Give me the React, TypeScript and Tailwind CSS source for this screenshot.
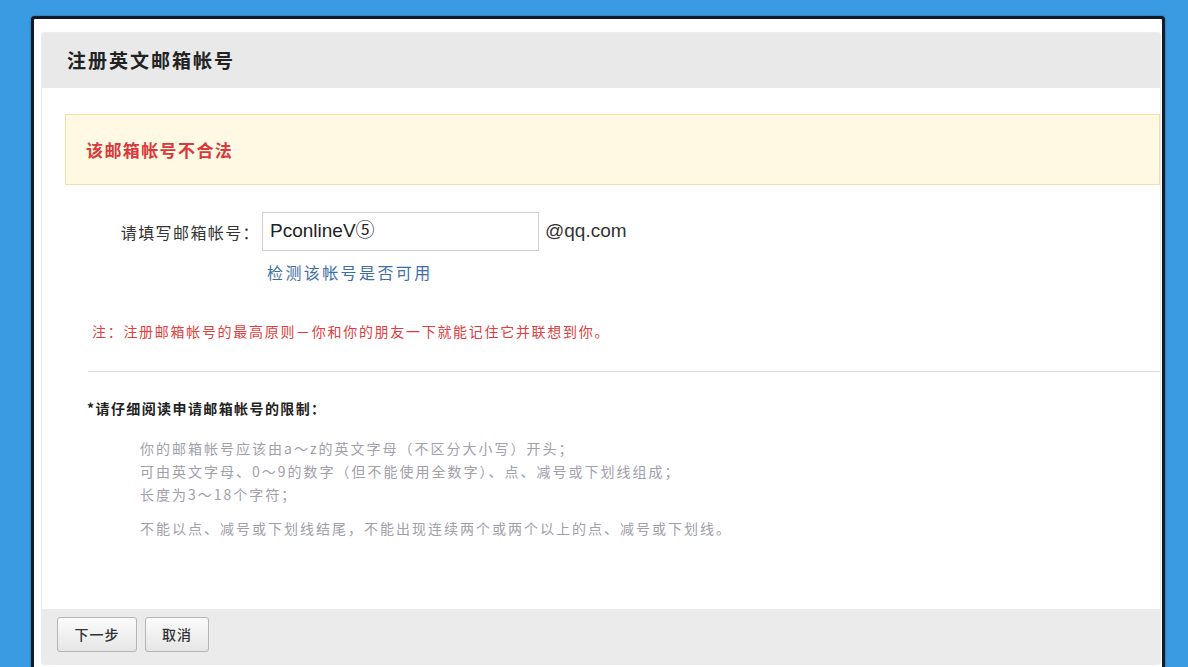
import React from "react";

const cjk = { fontFamily: '"Noto Sans CJK SC", "Noto Sans", sans-serif' };
const latin = { fontFamily: '"Liberation Sans", "Noto Sans CJK SC", sans-serif' };

export default function App() {
  const rules = [
    "你的邮箱帐号应该由a～z的英文字母（不区分大小写）开头；",
    "可由英文字母、0～9的数字（但不能使用全数字）、点、减号或下划线组成；",
    "长度为3～18个字符；",
  ];
  return (
    <div className="h-[667px] w-[1188px] overflow-hidden bg-[#3a9be3] pl-[31px] pt-[16px]" style={cjk}>
      <div className="h-[700px] w-[1134px] rounded-[4px] border-[3px] border-[#0c1b27] bg-white pl-[7px] pr-[1px] pt-[13px] shadow-[0_0_2px_rgba(0,0,0,0.5)]">
        <div className="rounded-[3px] border border-[#ececec]">
          {/* header */}
          <div className="flex h-[55px] items-center bg-[#e9e9e9] pl-[25px] text-[19px] font-bold tracking-[2px] text-[#222]">
            注册英文邮箱帐号
          </div>
          {/* body */}
          <div className="flex h-[521px] flex-col">
            <div className="ml-[23px] mt-[26px] flex h-[71px] items-center border border-[#f3e0a6] bg-[#fff8e3] pl-[20px] text-[17px] font-bold tracking-[1.4px] text-[#d8393b]">
              该邮箱帐号不合法
            </div>
            <div className="mt-[27px] flex items-center">
              <div className="w-[220px] pr-[2px] text-right text-[16px] tracking-[1.4px] text-[#333]">请填写邮箱帐号：</div>
              <div className="flex h-[39px] w-[277px] items-center border border-[#cfcfcf] bg-white pl-[7px] text-[19px] text-[#222]" style={latin}>
                PconlineV⑤
              </div>
              <div className="ml-[6px] text-[19px] text-[#333]" style={latin}>@qq.com</div>
            </div>
            <div className="ml-[225px] mt-[10px] h-[22px] text-[16px] leading-[22px] tracking-[2.4px] text-[#3d6ea8]">检测该帐号是否可用</div>
            <div className="ml-[50px] mt-[38px] h-[20px] text-[14px] leading-[20px] tracking-[1.7px] text-[#e23c3e]">
              注：注册邮箱帐号的最高原则－你和你的朋友一下就能记住它并联想到你。
            </div>
            <div className="ml-[46px] mt-[30px] border-t border-[#dedede]" />
            <div className="ml-[45px] mt-[26px] h-[20px] text-[14px] font-bold leading-[20px] tracking-[1.4px] text-[#222]">
              *请仔细阅读申请邮箱帐号的限制：
            </div>
            <div className="ml-[98px] mt-[19px] text-[14px] leading-[23px] tracking-[2px] text-[#a0a0ab]">
              {rules.map((r) => (
                <div key={r} className="h-[23px]">{r}</div>
              ))}
              <div className="mt-[11px] h-[23px]">不能以点、减号或下划线结尾，不能出现连续两个或两个以上的点、减号或下划线。</div>
            </div>
          </div>
          {/* footer */}
          <div className="flex h-[55px] gap-[8px] bg-[#ebebeb] pl-[15px] pt-[8px]">
            <button className="h-[35px] w-[80px] rounded-[3px] border border-[#b4b4b4] bg-gradient-to-b from-[#fbfbfb] to-[#e6e6e6] text-[14px] font-medium tracking-[1px] text-[#333]">
              下一步
            </button>
            <button className="h-[35px] w-[64px] rounded-[3px] border border-[#b4b4b4] bg-gradient-to-b from-[#fbfbfb] to-[#e6e6e6] text-[14px] font-medium tracking-[1px] text-[#333]">
              取消
            </button>
          </div>
        </div>
      </div>
    </div>
  );
}
